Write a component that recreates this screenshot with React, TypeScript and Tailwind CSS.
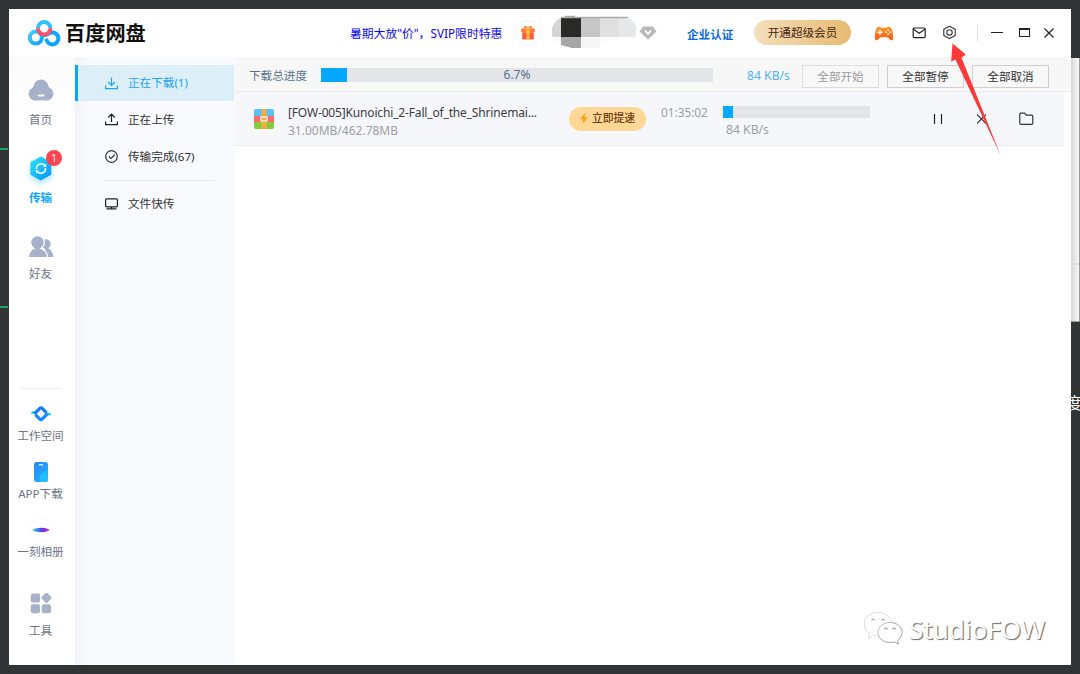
import type { ReactNode } from "react";

const sideTop = [
  { label: "首页", icon: <HomeIcon />, gap: "mt-5", labelGap: "mt-[9px]" },
  { label: "传输", icon: <TransferIcon />, gap: "mt-[27px]", labelGap: "mt-[9px]", active: true, badge: 1 },
  { label: "好友", icon: <FriendsIcon />, gap: "mt-[28px]", labelGap: "mt-[6px]" },
];

const sideBottom = [
  { label: "工作空间", icon: <WorkspaceIcon />, gap: "mt-3", labelGap: "mt-[1px]" },
  { label: "APP下载", icon: <PhoneIcon />, gap: "mt-[15px]", labelGap: "mt-[1px]" },
  { label: "一刻相册", icon: <AlbumIcon />, gap: "mt-[15px]", labelGap: "mt-[1px]" },
  { label: "工具", icon: <ToolsIcon />, gap: "mt-[30px]", labelGap: "mt-[7px]" },
];

type SideItemProps = {
  label: string;
  icon: ReactNode;
  gap: string;
  labelGap: string;
  active?: boolean;
  badge?: number;
};

function HomeIcon() {
  return (
    <svg width="26" height="24" viewBox="0 0 26 24">
      <g fill="#a7b1c9">
        <circle cx="13" cy="9" r="7.600" />
        <path d="M5.800 8.500h14.400l3.300 3.500v4.500H2.500V12Z" />
        <circle cx="7.200" cy="15.800" r="6.600" />
        <circle cx="18.800" cy="15.800" r="6.600" />
        <rect x="7" y="12" width="12" height="10.4" />
      </g>
      <rect x="9.700" y="16.400" width="6.800" height="2" rx=".8" fill="#fff" />
    </svg>
  );
}

function TransferIcon() {
  return (
    <svg width="26" height="26" viewBox="0 0 26 26" className="overflow-visible drop-shadow-[0_3px_3px_rgba(0,160,255,0.3)]">
      <defs>
        <linearGradient id="hex" x1="0" y1="0" x2="1" y2="1">
          <stop offset="0" stopColor="#2ee0fa" />
          <stop offset="1" stopColor="#0595ff" />
        </linearGradient>
      </defs>
      <path
        d="M12.800 2.800 22.100 8v11l-9.300 5.200L3.500 19V8Z"
        fill="url(#hex)"
        stroke="url(#hex)"
        strokeWidth="2.400"
        strokeLinejoin="round"
      />
      <g fill="none" stroke="#e9fbff" strokeWidth="1.600">
        <path d="M8.600 14.200a4.600 4.600 0 0 1 8-3.800" />
        <path d="M17.400 12.800a4.600 4.600 0 0 1-8 3.800" />
      </g>
      <path d="M15 11.600l3.400.3-.5-3.400ZM11 15.400l-3.400-.3.5 3.400Z" fill="#e9fbff" />
    </svg>
  );
}

function FriendsIcon() {
  return (
    <svg width="26" height="26" viewBox="0 0 26 26" fill="#a7b1c9">
      <circle cx="18" cy="10" r="4.700" />
      <path d="M17 13.500c5 0 8 4.500 8.300 9.500H17Z" />
      <g stroke="#fff" strokeWidth="1.200">
        <path d="M.4 23.600c.2-5 3-8.200 5.800-9.200a6.800 6.800 0 1 1 6.600 0c3.400 1.200 6.500 4.200 6.700 9.200Z" />
      </g>
    </svg>
  );
}

function WorkspaceIcon() {
  return (
    <svg width="20" height="18" viewBox="0 0 20 18" fill="none" strokeWidth="3.200" strokeLinejoin="round">
      <path d="M.4 7.200c1.600 1 3 .6 4.400-.2" stroke="#20d2f8" strokeWidth="2.600" />
      <path d="M19.600 9.600c-1.600-1-3-.6-4.400.2" stroke="#20d2f8" strokeWidth="2.600" />
      <path d="M3.400 8.800 8.600 3.600a2 2 0 0 1 2.800 0l4.200 4.200" stroke="#117cf5" />
      <path d="M16.600 8.600 11.400 13.900a2 2 0 0 1-2.800 0L4.400 9.600" stroke="#1789fa" />
    </svg>
  );
}

function PhoneIcon() {
  return (
    <svg width="14" height="20" viewBox="0 0 14 20">
      <defs>
        <linearGradient id="phone" x1="0" y1="0" x2="1" y2="1">
          <stop offset="0" stopColor="#2a86fb" />
          <stop offset="1" stopColor="#20b3ff" />
        </linearGradient>
      </defs>
      <rect width="14" height="20" rx="2.500" fill="url(#phone)" />
      <path d="M14 8.500A8.500 8.500 0 0 0 6 20h5.500a2.500 2.500 0 0 0 2.500-2.500Z" fill="#21bdff" />
      <rect x="4.800" y="2" width="4.400" height="1.600" rx=".8" fill="#d8efff" />
    </svg>
  );
}

function AlbumIcon() {
  return (
    <svg width="24" height="24" viewBox="0 0 24 24">
      <defs>
        <linearGradient id="album">
          <stop offset="0" stopColor="#35e0c0" />
          <stop offset=".3" stopColor="#3b82f6" />
          <stop offset=".65" stopColor="#6a28e6" />
          <stop offset="1" stopColor="#ff3fa8" />
        </linearGradient>
      </defs>
      <circle cx="12" cy="12" r="11.300" fill="#fff" stroke="#f7f7f8" />
      <path d="M3 12c5-3 13-3 18 0-5 3-13 3-18 0Z" fill="url(#album)" />
    </svg>
  );
}

function ToolsIcon() {
  return (
    <svg width="22" height="22" viewBox="0 0 22 22" fill="#a7b1c9">
      <rect x=".8" y="1.400" width="9.200" height="9" rx="2" />
      <rect x=".8" y="12.200" width="9.200" height="9" rx="2" />
      <rect x="11.800" y="12.200" width="9.200" height="9" rx="2" />
      <rect x="12.400" y="1.800" width="8" height="8" rx="1.500" transform="rotate(45 16.400 5.800)" />
    </svg>
  );
}

function Logo() {
  return (
    <svg width="34" height="28" viewBox="0 0 34 28" fill="none" strokeWidth="4">
      <defs>
        <linearGradient id="logoLeft" x1="0" y1="0" x2="1" y2="1">
          <stop offset="0" stopColor="#3ccdfc" />
          <stop offset="1" stopColor="#159efc" />
        </linearGradient>
      </defs>
      <circle cx="8.800" cy="18.600" r="6" stroke="url(#logoLeft)" />
      <path d="M11 9.200a6.200 6.200 0 0 1 12.400 0" stroke="#2fc0fb" />
      <path d="M12.800 14c1.600 1.800 3.400 2.200 4.600 2.200s2.800-.2 4.400-1.600a6 6 0 1 1-2.100 6.800" stroke="#0ea5fb" strokeLinecap="round" />
      <path d="M10.900 9.200a6.300 6.300 0 0 0 12.600 0" stroke="#fb4f6d" />
    </svg>
  );
}

function GiftIcon() {
  return (
    <svg width="14" height="14" viewBox="0 0 14 14">
      <path d="M7 3.800C3.500 3.600 2.500 1.200 4 .8 5.500.4 6.600 2 7 3.800 7.400 2 8.500.4 10 .8c1.500.4.500 2.800-3 3Z" fill="none" stroke="#ff8a2a" strokeWidth="1.400" />
      <rect x=".2" y="2.600" width="13.600" height="4" rx=".6" fill="#ff7a36" />
      <rect x="1.200" y="6.600" width="11.600" height="7" rx=".8" fill="#fb5a3c" />
      <path d="M5.400 2.600h3.200v11H5.400Z" fill="#ffd04a" />
      <path d="M7 2.600v11" stroke="#ff8a2a" strokeWidth=".8" />
    </svg>
  );
}

function GamepadIcon() {
  return (
    <svg width="20" height="15" viewBox="0 0 20 15">
      <defs>
        <linearGradient id="pad" x1="0" y1="0" x2="0" y2="1">
          <stop offset="0" stopColor="#ff9c22" />
          <stop offset="1" stopColor="#ff5417" />
        </linearGradient>
      </defs>
      <path
        d="M4.800.8c1.600-.4 2.200.9 3.200.9h4c1 0 1.600-1.300 3.200-.9 2.700.6 3.400 4.200 3.800 8.200.3 3.200.2 5.200-1.400 5.200-2.200 0-2.600-3-4.600-3H7c-2 0-2.400 3-4.600 3C.8 14.200.700 12.200 1 9 1.400 5 2.100 1.400 4.800.8Z"
        fill="url(#pad)"
      />
      <path d="M6 3.800v5M3.500 6.300h5" stroke="#fff" strokeWidth="1.500" />
      <g fill="#fff">
        <circle cx="14.200" cy="4.200" r=".9" />
        <circle cx="14.200" cy="8.200" r=".9" />
        <circle cx="12.200" cy="6.200" r=".9" />
        <circle cx="16.200" cy="6.200" r=".9" />
      </g>
    </svg>
  );
}

function ArchiveIcon() {
  return (
    <svg width="20" height="20" viewBox="0 0 20 20">
      <path d="M2 0h16a2 2 0 0 1 2 2v5H0V2a2 2 0 0 1 2-2Z" fill="#55c3fb" />
      <path d="M0 7h20v6H0Z" fill="#fd6a6a" />
      <path d="M0 13h20v5a2 2 0 0 1-2 2H2a2 2 0 0 1-2-2Z" fill="#86cb3c" />
      <path d="M7.500 0h5v20h-5Z" fill="#fbab3e" />
      <rect x="6.700" y="8" width="6.600" height="4" rx=".8" fill="#fbab3e" stroke="#fff3dd" strokeWidth="1.300" />
    </svg>
  );
}

function SideItem({ label, icon, gap, labelGap, active, badge }: SideItemProps) {
  return (
    <div className={`flex w-full flex-col items-center ${gap}`}>
      <div className="relative flex h-[26px] w-[26px] items-center justify-center">
        {icon}
        {badge && (
          <span className="absolute -top-[5px] left-[18px] flex h-4 w-4 items-center justify-center rounded-full bg-[#fb4650] text-[10px] leading-none text-white">
            {badge}
          </span>
        )}
      </div>
      <span
        className={`-ml-px h-4 text-[11.600px] leading-4 whitespace-nowrap ${labelGap} ${
          active ? "font-bold text-[#06a7ff]" : "text-[#6d7486]"
        }`}
      >
        {label}
      </span>
    </div>
  );
}

function TitleBar() {
  return (
    <header className="flex h-12 shrink-0 items-center bg-white pl-[18px]">
      <Logo />
      <span className="ml-[4px] w-[82px] text-[20.200px] leading-6 font-bold whitespace-nowrap text-[#111]">百度网盘</span>
      <span className="-mt-px ml-[203px] w-[153px] text-[11.800px] leading-4 whitespace-nowrap text-[#0b05f5]">
        暑期大放"价"，SVIP限时特惠
      </span>
      <div className="ml-[12px] flex h-[26px] w-[26px] shrink-0 items-center justify-center rounded-full border border-[#f5f5f5]">
        <GiftIcon />
      </div>
      {/* pixelated account name */}
      <svg className="-mt-[3px] ml-[10px] shrink-0" width="87" height="34" viewBox="0 0 87 34">
        <defs>
          <clipPath id="pill">
            <path d="M13 2.500h60a12 12 0 0 1 12 14c0 3-1 7-3 8.500H60v8H21l-11-3C4 26 .700 22 .700 17.500.700 10 5 3 13 2.500Z" />
          </clipPath>
        </defs>
        <g clipPath="url(#pill)">
          <path d="M0 0h10v22H0Z" fill="#d5d5d5" />
          <path d="M9 0h20v3H9Z" fill="#bdbdbd" />
          <path d="M0 22h10v12H0Z" fill="#fbfbfb" />
          <path d="M10 3h20v19H10Z" fill="#292927" />
          <path d="M10 22h20v12H10Z" fill="#a6a6a6" />
          <path d="M30 3h19v19H30Z" fill="#c7c7c7" />
          <path d="M49 3h19v19H49Z" fill="#e0e0e0" />
          <path d="M68 3h19v19H68Z" fill="#e6e7e8" />
          <path d="M30 22h19v12H30Z" fill="#f7f7f7" />
          <path d="M49 22h38v6H49Z" fill="#fcfcfc" />
        </g>
        <path d="M14 .800h10v1h53v1.400H10v-1.400h4Z" fill="#aaa" />
      </svg>
      <svg className="-mt-px ml-[1px] shrink-0" width="18" height="14" viewBox="0 0 18 14">
        <path d="M4 .5h10l3.500 5L9 13.500.5 5.500Z" fill="#b9b9b9" />
        <path d="M6 4.600 9 8l3-3.400" fill="none" stroke="#fff" strokeWidth="1.700" />
      </svg>
      <span className="mt-[3px] ml-[30px] w-[48px] text-[11.600px] leading-4 font-bold whitespace-nowrap text-[#0a6be0]">
        企业认证
      </span>
      <button className="-mt-px ml-[19px] h-[25px] w-[97px] shrink-0 rounded-full bg-gradient-to-r from-[#f3dfbc] to-[#e7ba70] text-[11.600px] leading-none whitespace-nowrap text-[#46220c]">
        开通超级会员
      </button>
      <div className="ml-[23px] shrink-0">
        <GamepadIcon />
      </div>
      <svg className="ml-[18px] shrink-0" width="15" height="12" viewBox="0 0 15 12" fill="none" stroke="#222" strokeWidth="1.200">
        <rect x="1.200" y="1" width="12" height="9.600" rx="1" />
        <path d="m1.500 2.200 5.700 4 5.700-4" />
      </svg>
      <svg className="-mt-px ml-[15px] shrink-0" width="15" height="15" viewBox="0 0 15 15" fill="none" stroke="#333" strokeWidth="1.100">
        <path d="M7.500 1.200 13.200 4.200v6.200L7.500 13.600 1.800 10.400V4.200Z" strokeLinejoin="round" />
        <circle cx="7.500" cy="7.400" r="2.700" />
      </svg>
      <div className="ml-[20px] h-4 w-px shrink-0 bg-[#dedede]" />
      <div className="-mt-px ml-[13px] h-px w-3 shrink-0 bg-[#222]" />
      <div className="-mt-px ml-[16px] h-[9px] w-[11px] shrink-0 border border-t-2 border-[#222]" />
      <svg className="-mt-px ml-[14px] shrink-0" width="10" height="10" viewBox="0 0 10 10" stroke="#222" strokeWidth="1.200">
        <path d="m.5.5 9 9M9.500.5l-9 9" />
      </svg>
    </header>
  );
}

function SubNav() {
  return (
    <nav className="w-[160px] shrink-0 bg-gradient-to-r from-[#f1f2f5] via-[#f8fafd] via-[8%] to-[#f8fafd] text-[11.600px] text-[#333]">
      <div className="mt-2 mr-px flex h-9 items-center border-l-[3px] border-[#06a7ff] bg-[#dceef8] pl-[27px] text-[#1da2f5]">
        <svg width="13" height="13" viewBox="0 0 13 13" fill="none" stroke="currentColor" strokeWidth="1.200">
          <path d="M6.500.5v7.500M3.200 5l3.300 3.300L9.800 5M.6 8.600v3h11.800v-3" />
        </svg>
        <span className="ml-[10px]">正在下载(1)</span>
      </div>
      <div className="flex h-[37px] items-center pl-[30px]">
        <svg width="13" height="13" viewBox="0 0 13 13" fill="none" stroke="#222" strokeWidth="1.200">
          <path d="M6.500 9V1.500M3.200 4.500l3.300-3.300 3.300 3.300M.6 8.600v3h11.800v-3" />
        </svg>
        <span className="ml-[10px]">正在上传</span>
      </div>
      <div className="flex h-[37px] items-center pl-[30px]">
        <svg width="13" height="13" viewBox="0 0 13 13" fill="none" stroke="#333" strokeWidth="1.200">
          <circle cx="6.500" cy="6.500" r="5.800" />
          <path d="m3.800 6.500 2.200 2 3.800-3.700" />
        </svg>
        <span className="ml-[10px]">传输完成(67)</span>
      </div>
      <div className="mt-[5px] ml-[29px] h-px w-[111px] bg-[#e9ebee]" />
      <div className="mt-1 flex h-[37px] items-center pl-[30px]">
        <svg width="13" height="12" viewBox="0 0 13 12" fill="none" stroke="#222" strokeWidth="1.200">
          <rect x=".6" y=".8" width="11.800" height="8" rx="1" />
          <path d="M1.500 10.900h10M6.500 9v2" />
        </svg>
        <span className="ml-[10px]">文件快传</span>
      </div>
    </nav>
  );
}

function Main() {
  return (
    <main className="flex min-w-0 flex-1 flex-col bg-white text-[11.600px]">
      <div className="flex h-[35px] shrink-0 items-center border-b border-[#ececec] bg-[#f7f7f7] pl-[14px]">
        <span className="mt-[3px] w-[72px] whitespace-nowrap text-[#55728a]">下载总进度</span>
        <div className="relative mt-[2px] h-[14px] w-[392px] bg-[#e3e5e9]">
          <div className="h-full w-[26px] bg-[#06a7ff]" />
          <span className="absolute inset-0 flex items-center justify-center text-[12px] text-[#55728a]">6.7%</span>
        </div>
        <span className="mt-[4px] ml-[34px] w-[55px] text-[12.200px] whitespace-nowrap text-[#4fb4f5]">84 KB/s</span>
        <div className="mt-[4px] flex gap-2">
          <button className="h-[23px] w-[77px] border border-[#dedede] bg-[#f8f8f8] pt-px text-[#9b9b9b]">全部开始</button>
          <button className="h-[23px] w-[77px] border border-[#cfcfcf] bg-[#f8f8f8] pt-px text-[#333]">全部暂停</button>
          <button className="h-[23px] w-[77px] border border-[#cfcfcf] bg-[#f8f8f8] pt-px text-[#333]">全部取消</button>
        </div>
      </div>
      <div className="mr-[7px] flex h-[54px] shrink-0 items-center border-b border-[#ebecef] bg-[#f5f7fb] pl-[19px] text-[12px]">
        <ArchiveIcon />
        <div className="ml-[14px] w-[281px] whitespace-nowrap">
          <div className="mt-[7px] leading-[18px] tracking-[-0.160px] text-[#3a3c40]">
            [FOW-005]Kunoichi_2-Fall_of_the_Shrinemai...
          </div>
          <div className="leading-[18px] text-[#9c9ea3]">31.00MB/462.78MB</div>
        </div>
        <button className="flex h-6 w-[77px] shrink-0 items-center justify-center gap-1 rounded-full bg-[#ffd898] text-[10.800px] font-medium whitespace-nowrap text-[#6b3e0b]">
          <svg width="8" height="11" viewBox="0 0 8 11">
            <path d="M5.200 0 0 6.200h3.200L2.400 11 8 4.500H4.600Z" fill="#f9a11b" />
          </svg>
          立即提速
        </button>
        <span className="-mt-[11px] ml-[15px] w-[62px] text-[11.800px] whitespace-nowrap text-[#9c9ea3]">01:35:02</span>
        <div className="mt-[8px] w-[147px]">
          <div className="h-3 bg-[#e3e5e9]">
            <div className="h-full w-[10px] bg-[#06a7ff]" />
          </div>
          <div className="mt-[3px] pl-[3px] text-[12.200px] leading-[18px] text-[#9c9ea3]">84 KB/s</div>
        </div>
        <svg className="ml-[63px]" width="10" height="10" viewBox="0 0 10 10" stroke="#222" strokeWidth="1.200">
          <path d="M1.500 0v10M8.500 0v10" />
        </svg>
        <svg className="ml-[34px]" width="9" height="10" viewBox="0 0 9 10" stroke="#333" strokeWidth="1.200">
          <path d="m0 .5 9 9M9 .5l-9 9" />
        </svg>
        <svg className="ml-[33px]" width="15" height="14" viewBox="0 0 15 14" fill="none" stroke="#333" strokeWidth="1.200">
          <path d="M1.600 1.200h4l1.600 2h5.500a1.100 1.100 0 0 1 1.100 1.100v7a1.100 1.100 0 0 1-1.100 1.100H1.900a1.100 1.100 0 0 1-1.100-1.100V2a.8.8 0 0 1 .8-.8Z" />
        </svg>
      </div>
    </main>
  );
}

function Watermark() {
  return (
    <div className="absolute top-[610px] left-[862px] flex items-center">
      <svg width="42" height="38" viewBox="0 0 42 38" fill="#fff" className="drop-shadow-[0.5px_0.5px_0.3px_rgba(0,0,0,0.4)]">
        <path d="M16 2.500c7.600 0 13.500 5 13.500 11.500S23.600 25.500 16 25.500c-1.600 0-3-.2-4.400-.6L6.500 28l1.200-4.600C4.500 21.300 2.500 18 2.500 14 2.500 7.500 8.400 2.500 16 2.500Z" stroke="#ececec" strokeWidth=".6" />
        <path d="M28 12.500c6.700 0 12 4.400 12 10 0 3.300-1.800 6-4.600 8l1 3.500-4-2.200c-1.400.4-2.800.6-4.400.6-6.700 0-12-4.300-12-9.900s5.300-10 12-10Z" stroke="#999" strokeWidth=".7" />
        <g fill="none" stroke="#8a8a8a" strokeWidth="1">
          <path d="M9.500 10.500a1.700 1.700 0 0 1 3.200 0M19.500 10.500a1.700 1.700 0 0 1 3.200 0M22.500 19.500a1.500 1.500 0 0 1 3 0M30.500 19.500a1.500 1.500 0 0 1 3 0" />
        </g>
      </svg>
      <span className="ml-[5px] font-['Noto_Sans'] text-[26px] leading-9 text-[#fdfdfd] [text-shadow:1px_1px_1px_#777,1px_1px_0_#aaa]">
        StudioFOW
      </span>
    </div>
  );
}

export default function App() {
  return (
    <div className="relative flex h-[674px] w-[1080px] overflow-hidden bg-[#333436] font-['Noto_Sans','Noto_Sans_CJK_SC',sans-serif]">
      <div className="w-[9px] shrink-0">
        <div className="mt-[148px] h-[2px] w-2 bg-[#1fa463]" />
        <div className="mt-[156px] h-[2px] w-2 bg-[#1fa463]" />
      </div>
      <div className="mt-[9px] flex h-[656px] w-[1062px] shrink-0 flex-col bg-white">
        <TitleBar />
        <div className="flex min-h-0 flex-1">
          <aside className="flex w-[66px] shrink-0 flex-col items-center bg-gradient-to-b from-[#fafafa] via-white via-10% to-white pr-[2px]">
            {sideTop.map((item) => (
              <SideItem key={item.label} {...item} />
            ))}
            <div className="mt-[106px] h-px w-10 shrink-0 bg-[#e9ebee]" />
            {sideBottom.map((item) => (
              <SideItem key={item.label} {...item} />
            ))}
          </aside>
          <SubNav />
          <Main />
        </div>
      </div>
      {/* strip of the window behind */}
      <div className="flex flex-1 flex-col overflow-hidden pt-[58px]">
        <div className="h-[264px] shrink-0 border-r border-b border-[#999] bg-gradient-to-r from-[#d6d6d6] to-[#fafafa] pt-[205px]">
          <div className="h-[2px] bg-[#dcdcdc]" />
        </div>
        <span className="mt-[69px] -ml-[5px] text-[16px] leading-6 text-white">度</span>
      </div>
      <svg className="absolute top-[42px] left-[948px]" width="56" height="116" viewBox="0 0 56 116">
        <path d="M4.500 1.500 17.800 12.500l-4.300 3.300L52.700 113.500 7.500 17.500l-4.300 2Z" fill="#fd3838" />
      </svg>
      <Watermark />
    </div>
  );
}
